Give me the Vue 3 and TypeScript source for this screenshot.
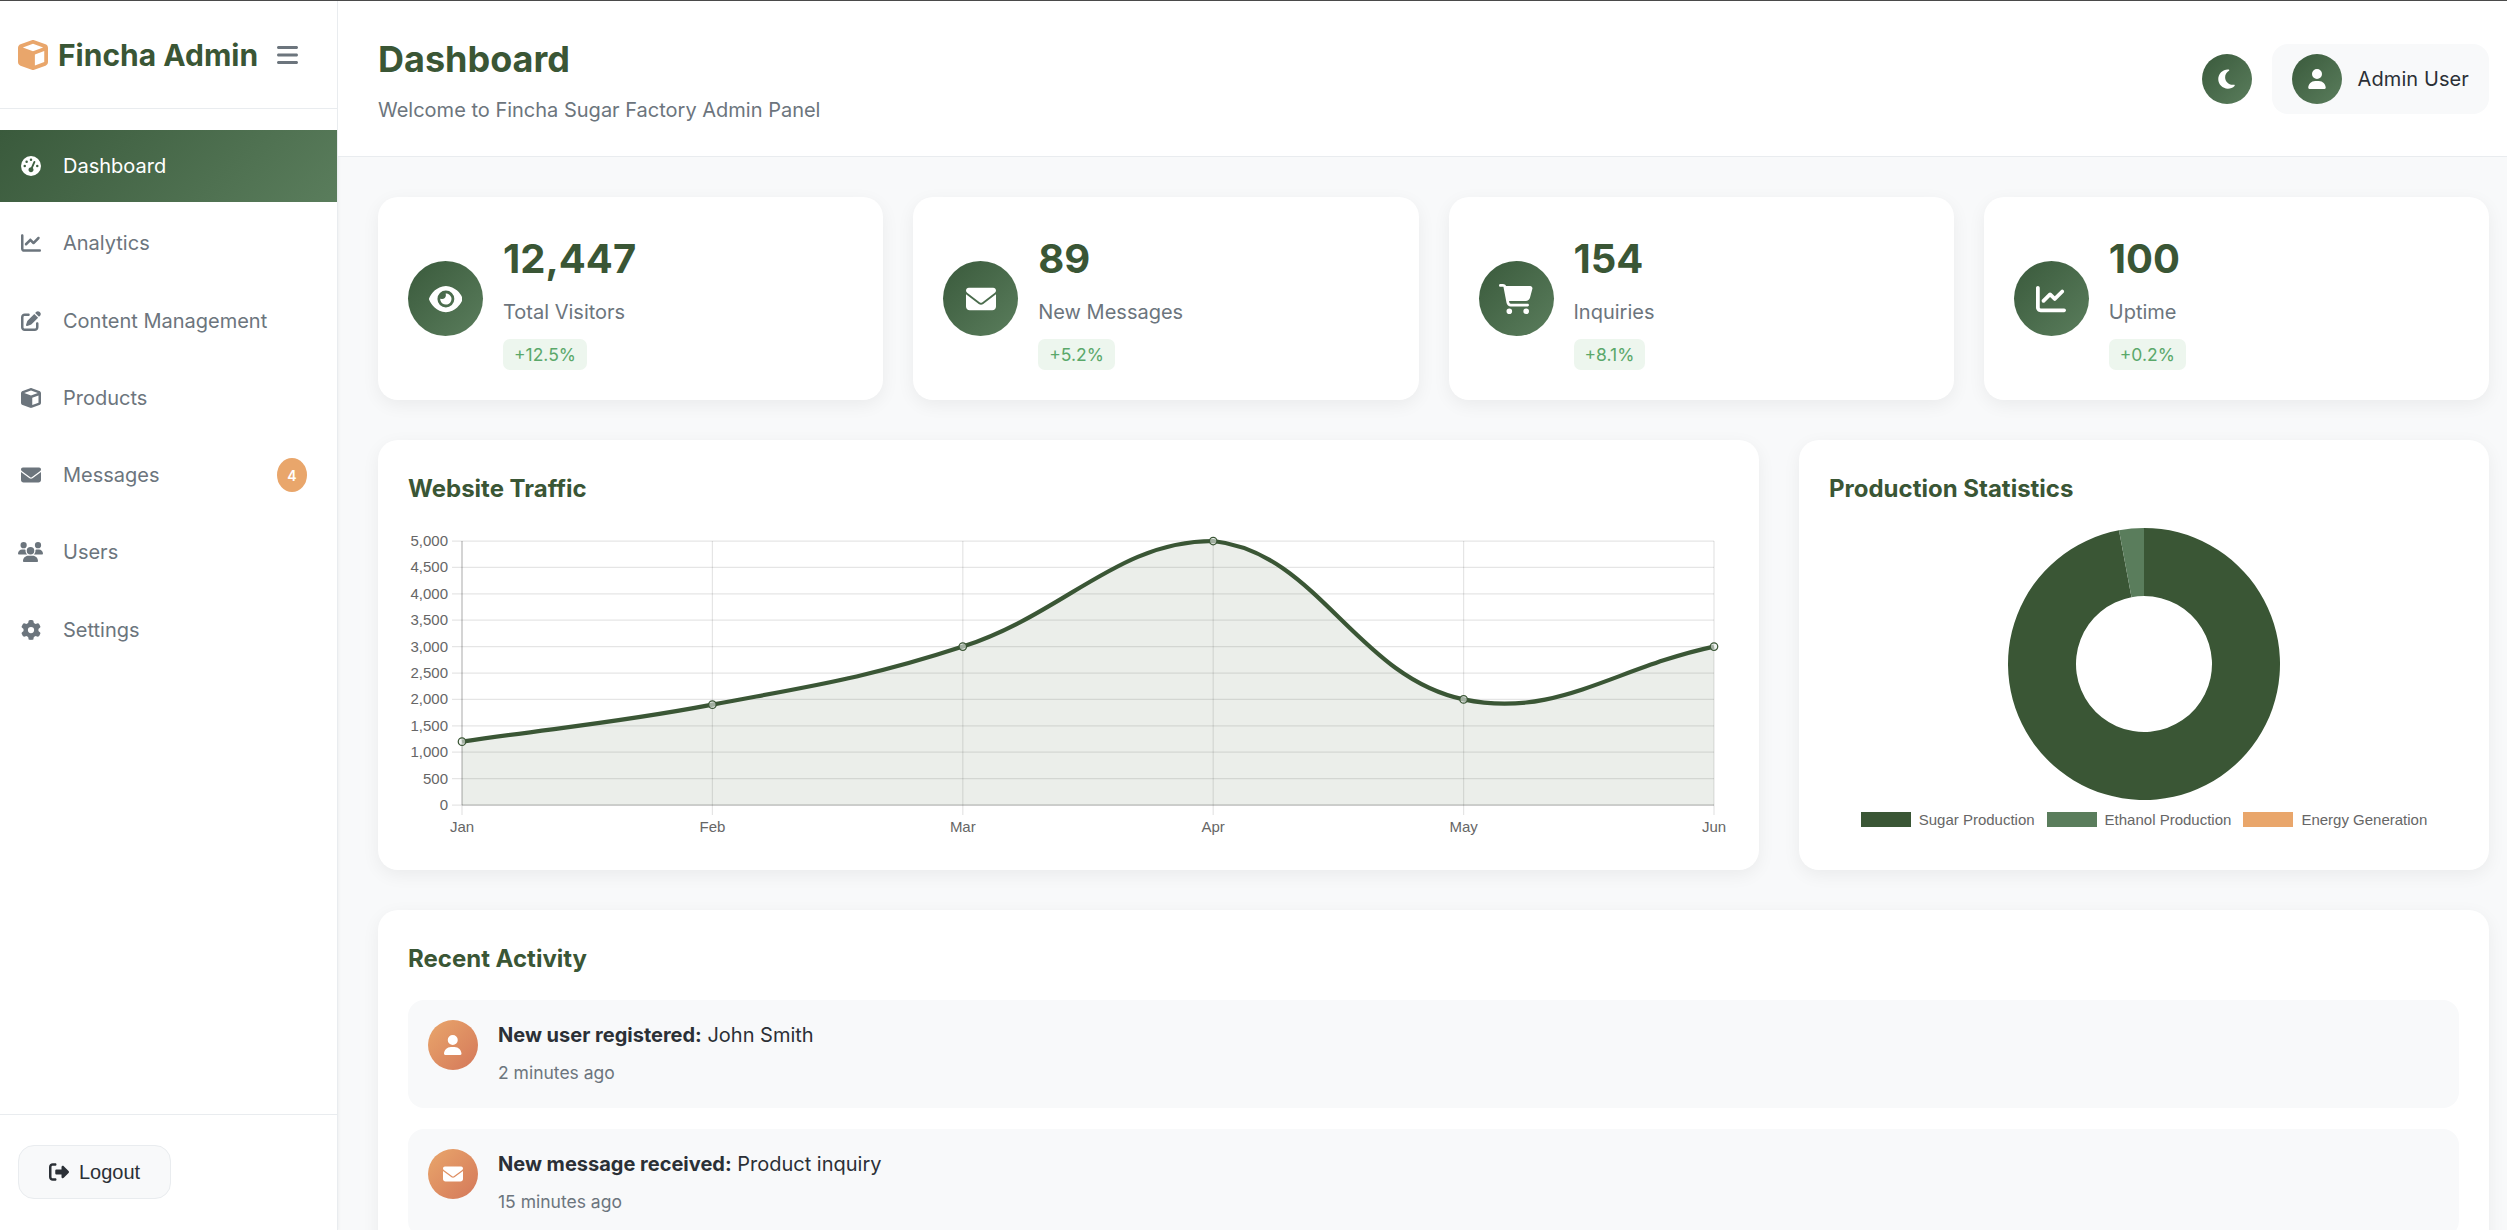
<script setup lang="ts">
import { computed } from 'vue'

type IconDef = { box: number; d: string }

const icons: Record<string, IconDef> = {
  cube: { box: 512, d: 'M234.5 5.7c13.9-5 29.1-5 43.1 0l192 68.6C495 83.4 512 107.5 512 134.6V377.4c0 27-17 51.2-42.5 60.3l-192 68.6c-13.9 5-29.1 5-43.1 0l-192-68.6C17 428.6 0 404.5 0 377.4V134.6c0-27 17-51.2 42.5-60.3l192-68.6zM256 66L82.3 128 256 190l173.7-62L256 66zm32 368.6l160-57.1v-188L288 246.6v188z' },
  bars: { box: 448, d: 'M0 96C0 78.3 14.3 64 32 64H416c17.7 0 32 14.3 32 32s-14.3 32-32 32H32C14.3 128 0 113.7 0 96zM0 256c0-17.7 14.3-32 32-32H416c17.7 0 32 14.3 32 32s-14.3 32-32 32H32c-17.7 0-32-14.3-32-32zM448 416c0 17.7-14.3 32-32 32H32c-17.7 0-32-14.3-32-32s14.3-32 32-32H416c17.7 0 32 14.3 32 32z' },
  gauge: { box: 512, d: 'M0 256a256 256 0 1 1 512 0A256 256 0 1 1 0 256zM288 96a32 32 0 1 0 -64 0 32 32 0 1 0 64 0zM256 416c35.3 0 64-28.7 64-64c0-17.4-6.9-33.1-18.1-44.6L366 161.7c5.3-12.1-.2-26.3-12.3-31.6s-26.3 .2-31.6 12.3L257.9 288c-.6 0-1.3 0-1.9 0c-35.3 0-64 28.7-64 64s28.7 64 64 64zM176 144a32 32 0 1 0 -64 0 32 32 0 1 0 64 0zM96 288a32 32 0 1 0 0-64 32 32 0 1 0 0 64zm352-32a32 32 0 1 0 -64 0 32 32 0 1 0 64 0z' },
  chart: { box: 512, d: 'M64 64c0-17.7-14.3-32-32-32S0 46.3 0 64V400c0 44.2 35.8 80 80 80H480c17.7 0 32-14.3 32-32s-14.3-32-32-32H80c-8.8 0-16-7.2-16-16V64zm406.6 86.6c12.5-12.5 12.5-32.8 0-45.3s-32.8-12.5-45.3 0L320 210.7l-57.4-57.4c-12.5-12.5-32.8-12.5-45.3 0l-112 112c-12.5 12.5-12.5 32.8 0 45.3s32.8 12.5 45.3 0L240 221.3l57.4 57.4c12.5 12.5 32.8 12.5 45.3 0l128-128z' },
  edit: { box: 512, d: 'M471.6 21.7c-21.9-21.9-57.3-21.9-79.2 0L362.3 51.7l97.9 97.9 30.1-30.1c21.9-21.9 21.9-57.3 0-79.2L471.6 21.7zm-299.2 220c-6.1 6.1-10.8 13.6-13.5 21.9l-29.6 88.8c-2.9 8.6-.6 18.1 5.8 24.6s15.9 8.7 24.6 5.8l88.8-29.6c8.2-2.7 15.7-7.4 21.9-13.5L437.7 172.3 339.7 74.3 172.4 241.7zM96 64C43 64 0 107 0 160V416c0 53 43 96 96 96H352c53 0 96-43 96-96V320c0-17.7-14.3-32-32-32s-32 14.3-32 32v96c0 17.7-14.3 32-32 32H96c-17.7 0-32-14.3-32-32V160c0-17.7 14.3-32 32-32h96c17.7 0 32-14.3 32-32s-14.3-32-32-32H96z' },
  envelope: { box: 512, d: 'M48 64C21.5 64 0 85.5 0 112c0 15.1 7.1 29.3 19.2 38.4L236.8 313.6c11.4 8.5 27 8.5 38.4 0L492.8 150.4c12.1-9.1 19.2-23.3 19.2-38.4c0-26.5-21.5-48-48-48H48zM0 176V384c0 35.3 28.7 64 64 64H448c35.3 0 64-28.7 64-64V176L294.4 339.2c-22.8 17.1-54 17.1-76.8 0L0 176z' },
  users: { box: 640, d: 'M144 0a80 80 0 1 1 0 160A80 80 0 1 1 144 0zM512 0a80 80 0 1 1 0 160A80 80 0 1 1 512 0zM0 298.7C0 239.8 47.8 192 106.7 192h42.7c15.9 0 31 3.5 44.6 9.7c-1.3 7.2-1.9 14.7-1.9 22.3c0 38.2 16.8 72.5 43.3 96c-.2 0-.4 0-.7 0H21.3C9.6 320 0 310.4 0 298.7zM405.3 320c-.2 0-.4 0-.7 0c26.6-23.5 43.3-57.8 43.3-96c0-7.6-.7-15-1.9-22.3c13.6-6.3 28.7-9.7 44.6-9.7h42.7C592.2 192 640 239.8 640 298.7c0 11.8-9.6 21.3-21.3 21.3H405.3zM224 224a96 96 0 1 1 192 0 96 96 0 1 1 -192 0zM128 485.3C128 411.7 187.7 352 261.3 352H378.7C452.3 352 512 411.7 512 485.3c0 14.7-11.9 26.7-26.7 26.7H154.7c-14.7 0-26.7-11.9-26.7-26.7z' },
  gear: { box: 512, d: 'M495.9 166.6c3.2 8.7 .5 18.4-6.4 24.6l-43.3 39.4c1.1 8.3 1.7 16.8 1.7 25.4s-.6 17.1-1.7 25.4l43.3 39.4c6.9 6.2 9.6 15.9 6.4 24.6c-4.4 11.9-9.7 23.3-15.8 34.3l-4.7 8.1c-6.6 11-14 21.4-22.1 31.2c-5.9 7.2-15.7 9.6-24.5 6.8l-55.7-17.7c-13.4 10.3-28.2 18.9-44 25.4l-12.5 57.1c-2 9.1-9 16.3-18.2 17.8c-13.8 2.3-28 3.5-42.5 3.5s-28.7-1.2-42.5-3.5c-9.2-1.5-16.2-8.7-18.2-17.8l-12.5-57.1c-15.8-6.5-30.6-15.1-44-25.4L83.1 425.9c-8.8 2.8-18.6 .3-24.5-6.8c-8.1-9.8-15.5-20.2-22.1-31.2l-4.7-8.1c-6.1-11-11.4-22.4-15.8-34.3c-3.2-8.7-.5-18.4 6.4-24.6l43.3-39.4C64.6 273.1 64 264.6 64 256s.6-17.1 1.7-25.4L22.4 191.2c-6.9-6.2-9.6-15.9-6.4-24.6c4.4-11.9 9.7-23.3 15.8-34.3l4.7-8.1c6.6-11 14-21.4 22.1-31.2c5.9-7.2 15.7-9.6 24.5-6.8l55.7 17.7c13.4-10.3 28.2-18.9 44-25.4l12.5-57.1c2-9.1 9-16.3 18.2-17.8C227.3 1.2 241.5 0 256 0s28.7 1.2 42.5 3.5c9.2 1.5 16.2 8.7 18.2 17.8l12.5 57.1c15.8 6.5 30.6 15.1 44 25.4l55.7-17.7c8.8-2.8 18.6-.3 24.5 6.8c8.1 9.8 15.5 20.2 22.1 31.2l4.7 8.1c6.1 11 11.4 22.4 15.8 34.3zM256 336a80 80 0 1 0 0-160 80 80 0 1 0 0 160z' },
  logout: { box: 512, d: 'M377.9 105.9L500.7 228.7c7.2 7.2 11.3 17.1 11.3 27.3s-4.1 20.1-11.3 27.3L377.9 406.1c-6.4 6.4-15 9.9-24 9.9c-18.7 0-33.9-15.2-33.9-33.9l0-62.1-128 0c-17.7 0-32-14.3-32-32l0-64c0-17.7 14.3-32 32-32l128 0 0-62.1c0-18.7 15.2-33.9 33.9-33.9c9 0 17.6 3.6 24 9.9zM160 96L96 96c-17.7 0-32 14.3-32 32l0 256c0 17.7 14.3 32 32 32l64 0c17.7 0 32 14.3 32 32s-14.3 32-32 32l-64 0c-53 0-96-43-96-96L0 128C0 75 43 32 96 32l64 0c17.7 0 32 14.3 32 32s-14.3 32-32 32z' },
  moon: { box: 384, d: 'M223.5 32C100 32 0 132.3 0 256S100 480 223.5 480c60.6 0 115.5-24.2 155.8-63.4c5-4.9 6.3-12.5 3.1-18.7s-10.1-9.7-17-8.5c-9.8 1.7-19.8 2.6-30.1 2.6c-96.9 0-175.5-78.8-175.5-176c0-65.8 36-123.1 89.3-153.3c6.1-3.5 9.2-10.5 7.7-17.3s-7.3-11.9-14.3-12.5c-6.3-.5-12.6-.8-19-.8z' },
  user: { box: 448, d: 'M224 256A128 128 0 1 0 224 0a128 128 0 1 0 0 256zm-45.7 48C79.8 304 0 383.8 0 482.3C0 498.7 13.3 512 29.7 512H418.3c16.4 0 29.7-13.3 29.7-29.7C448 383.8 368.2 304 269.7 304H178.3z' },
  eye: { box: 576, d: 'M288 32c-80.8 0-145.5 36.8-192.6 80.6C48.6 156 17.3 208 2.5 243.7c-3.3 7.9-3.3 16.7 0 24.6C17.3 304 48.6 356 95.4 399.4C142.5 443.2 207.2 480 288 480s145.5-36.8 192.6-80.6c46.8-43.5 78.1-95.4 93-131.1c3.3-7.9 3.3-16.7 0-24.6c-14.9-35.7-46.2-87.7-93-131.1C433.5 68.8 368.8 32 288 32zM144 256a144 144 0 1 1 288 0 144 144 0 1 1 -288 0zm144-64c0 35.3-28.7 64-64 64c-7.1 0-13.9-1.2-20.3-3.3c-5.5-1.8-11.9 1.6-11.7 7.4c.3 6.9 1.3 13.8 3.2 20.7c13.7 51.2 66.4 81.6 117.6 67.9s81.6-66.4 67.9-117.6c-11.1-41.5-47.8-69.4-88.6-71.1c-5.8-.2-9.2 6.1-7.4 11.7c2.1 6.4 3.3 13.2 3.3 20.3z' },
  cart: { box: 576, d: 'M0 24C0 10.7 10.7 0 24 0H69.5c22 0 41.5 12.8 50.6 32h411c26.3 0 45.5 25 38.6 50.4l-41 152.3c-8.5 31.4-37 53.3-69.5 53.3H170.7l5.4 28.5c2.2 11.3 12.1 19.5 23.6 19.5H488c13.3 0 24 10.7 24 24s-10.7 24-24 24H199.7c-34.6 0-64.3-24.6-70.7-58.5L77.4 54.5c-.7-3.8-4-6.5-7.9-6.5H24C10.7 48 0 37.3 0 24zM128 464a48 48 0 1 1 96 0 48 48 0 1 1 -96 0zm336-48a48 48 0 1 1 0 96 48 48 0 1 1 0-96z' },
}

const iconWidth = (name: string, h: number) => (icons[name].box / 512) * h

const nav = [
  { label: 'Dashboard', icon: 'gauge', active: true },
  { label: 'Analytics', icon: 'chart' },
  { label: 'Content Management', icon: 'edit' },
  { label: 'Products', icon: 'cube' },
  { label: 'Messages', icon: 'envelope', badge: '4' },
  { label: 'Users', icon: 'users' },
  { label: 'Settings', icon: 'gear' },
]

const stats = [
  { value: '12,447', label: 'Total Visitors', change: '+12.5%', icon: 'eye' },
  { value: '89', label: 'New Messages', change: '+5.2%', icon: 'envelope' },
  { value: '154', label: 'Inquiries', change: '+8.1%', icon: 'cart' },
  { value: '100', label: 'Uptime', change: '+0.2%', icon: 'chart' },
]

const activity = [
  { strong: 'New user registered:', rest: ' John Smith', time: '2 minutes ago', icon: 'user' },
  { strong: 'New message received:', rest: ' Product inquiry', time: '15 minutes ago', icon: 'envelope' },
]

/* Line chart geometry, in the svg's own coordinates */
const chartW = 1322
const chartH = 310
const left = 54
const top = 11
const plotW = 1252
const plotH = 264
const months = ['Jan', 'Feb', 'Mar', 'Apr', 'May', 'Jun']
const data = [1200, 1900, 3000, 5000, 2000, 3000]
const ticks = [5000, 4500, 4000, 3500, 3000, 2500, 2000, 1500, 1000, 500, 0]
const xAt = (i: number) => left + (plotW / 5) * i
const yAt = (v: number) => top + plotH * (1 - v / 5000)
const points = data.map((v, i) => ({ x: xAt(i), y: yAt(v) }))
const fmt = (n: number) => n.toLocaleString('en-US')

const linePath = computed(() => {
  const t = 0.4
  const clampX = (x: number) => Math.min(left + plotW, Math.max(left, x))
  const clampY = (y: number) => Math.min(top + plotH, Math.max(top, y))
  const ctrl = points.map((p, i) => {
    const prev = points[i - 1] ?? p
    const next = points[i + 1] ?? p
    const d01 = Math.hypot(p.x - prev.x, p.y - prev.y)
    const d12 = Math.hypot(next.x - p.x, next.y - p.y)
    const sum = d01 + d12 || 1
    const dx = next.x - prev.x
    const dy = next.y - prev.y
    return {
      inX: clampX(p.x - t * (d01 / sum) * dx),
      inY: clampY(p.y - t * (d01 / sum) * dy),
      outX: clampX(p.x + t * (d12 / sum) * dx),
      outY: clampY(p.y + t * (d12 / sum) * dy),
    }
  })
  let d = `M${points[0].x} ${points[0].y}`
  for (let i = 1; i < points.length; i++) {
    d += ` C${ctrl[i - 1].outX} ${ctrl[i - 1].outY} ${ctrl[i].inX} ${ctrl[i].inY} ${points[i].x} ${points[i].y}`
  }
  return d
})
const areaPath = computed(
  () => `${linePath.value} L${xAt(5)} ${yAt(0)} L${xAt(0)} ${yAt(0)} Z`,
)

/* Doughnut */
const R = 136
const r = 68
const c = 136
const polar = (rad: number, deg: number) => {
  const a = ((deg - 90) * Math.PI) / 180
  return `${c + rad * Math.cos(a)} ${c + rad * Math.sin(a)}`
}
const slice = (from: number, to: number) => {
  const large = to - from > 180 ? 1 : 0
  return `M${polar(R, from)} A${R} ${R} 0 ${large} 1 ${polar(R, to)} L${polar(r, to)} A${r} ${r} 0 ${large} 0 ${polar(r, from)} Z`
}
const legend = [
  { label: 'Sugar Production', color: '#3a5635' },
  { label: 'Ethanol Production', color: '#5a7d5c' },
  { label: 'Energy Generation', color: '#e9a66b' },
]
</script>

<template>
  <div class="app">
    <aside class="sidebar">
      <div class="brand">
        <svg class="brand-icon" :width="30" :height="30" viewBox="0 0 512 512"><path :d="icons.cube.d" /></svg>
        <span class="brand-name">Fincha Admin</span>
        <svg class="menu-icon" :width="21" :height="24" viewBox="0 0 448 512"><path :d="icons.bars.d" /></svg>
      </div>
      <nav class="nav">
        <a v-for="item in nav" :key="item.label" class="nav-item" :class="{ active: item.active }">
          <span class="nav-icon">
            <svg :width="iconWidth(item.icon, 20)" height="20" :viewBox="`0 0 ${icons[item.icon].box} 512`"><path :d="icons[item.icon].d" /></svg>
          </span>
          <span class="nav-label">{{ item.label }}</span>
          <span v-if="item.badge" class="nav-badge">{{ item.badge }}</span>
        </a>
      </nav>
      <div class="side-foot">
        <button class="logout">
          <svg width="20" height="20" viewBox="0 0 512 512"><path :d="icons.logout.d" /></svg>
          <span>Logout</span>
        </button>
      </div>
    </aside>

    <div class="main">
      <header class="topbar">
        <div class="heading">
          <h1 class="page-title">Dashboard</h1>
          <p class="page-sub">Welcome to Fincha Sugar Factory Admin Panel</p>
        </div>
        <div class="top-right">
          <div class="round">
            <svg width="17" height="22" viewBox="0 0 384 512"><path :d="icons.moon.d" /></svg>
          </div>
          <div class="user-pill">
            <div class="round">
              <svg width="18" height="20" viewBox="0 0 448 512"><path :d="icons.user.d" /></svg>
            </div>
            <span class="user-name">Admin User</span>
          </div>
        </div>
      </header>

      <main class="content">
        <section class="stats">
          <div v-for="s in stats" :key="s.label" class="card stat">
            <div class="stat-icon">
              <svg :width="iconWidth(s.icon, 30)" height="30" :viewBox="`0 0 ${icons[s.icon].box} 512`"><path :d="icons[s.icon].d" /></svg>
            </div>
            <div class="stat-body">
              <div class="stat-value">{{ s.value }}</div>
              <div class="stat-label">{{ s.label }}</div>
              <span class="stat-change">{{ s.change }}</span>
            </div>
          </div>
        </section>

        <section class="charts">
          <div class="card chart-card">
            <h3 class="card-title">Website Traffic</h3>
            <svg class="line-chart" :width="chartW" :height="chartH" :viewBox="`0 0 ${chartW} ${chartH}`">
              <g stroke="rgba(0,0,0,0.1)" stroke-width="1.25">
                <line v-for="t in ticks" :key="t" :x1="left - 10" :x2="left + plotW" :y1="yAt(t)" :y2="yAt(t)" />
                <line v-for="(m, i) in months" :key="m" :x1="xAt(i)" :x2="xAt(i)" :y1="top" :y2="top + plotH + 10" />
              </g>
              <line :x1="left" :x2="left" :y1="top" :y2="top + plotH" stroke="rgba(0,0,0,0.18)" stroke-width="1.25" />
              <line :x1="left" :x2="left + plotW" :y1="top + plotH" :y2="top + plotH" stroke="rgba(0,0,0,0.18)" stroke-width="1.25" />
              <path :d="areaPath" fill="rgba(58,86,53,0.1)" />
              <path :d="linePath" fill="none" stroke="#3a5635" stroke-width="4.2" />
              <circle v-for="(p, i) in points" :key="i" :cx="p.x" :cy="p.y" r="3.75" fill="rgba(232,236,233,0.6)" stroke="#3a5635" stroke-width="1.25" />
              <text v-for="t in ticks" :key="'y' + t" class="tick" :x="left - 14" :y="yAt(t) + 5" text-anchor="end">{{ fmt(t) }}</text>
              <text v-for="(m, i) in months" :key="'x' + m" class="tick" :x="xAt(i)" :y="top + plotH + 27" text-anchor="middle">{{ m }}</text>
            </svg>
          </div>

          <div class="card donut-card">
            <h3 class="card-title">Production Statistics</h3>
            <svg class="donut" width="272" height="272" viewBox="0 0 272 272">
              <path :d="slice(0, 349.4)" fill="#3a5635" />
              <path :d="slice(349.4, 360)" fill="#5a7d5c" />
            </svg>
            <div class="legend">
              <div v-for="l in legend" :key="l.label" class="legend-item">
                <span class="legend-box" :style="{ background: l.color }"></span>
                <span>{{ l.label }}</span>
              </div>
            </div>
          </div>
        </section>

        <section class="card recent">
          <h3 class="card-title">Recent Activity</h3>
          <div class="activity-list">
            <div v-for="a in activity" :key="a.time" class="activity">
              <div class="activity-icon">
                <svg :width="iconWidth(a.icon, 20)" height="20" :viewBox="`0 0 ${icons[a.icon].box} 512`"><path :d="icons[a.icon].d" /></svg>
              </div>
              <div class="activity-body">
                <div class="activity-text"><strong>{{ a.strong }}</strong>{{ a.rest }}</div>
                <div class="activity-time">{{ a.time }}</div>
              </div>
            </div>
          </div>
        </section>
      </main>
    </div>
  </div>
</template>

<style>
html, body { margin: 0; padding: 0; overflow: hidden; background: #f8f9fa; }
</style>

<style scoped>
.app {
  display: flex;
  width: 2507px;
  height: 1230px;
  overflow: hidden;
  box-sizing: border-box;
  border-top: 1px solid #4a4a4a;
  font-family: Inter, "Noto Sans", sans-serif;
  color: #2b3036;
  background: #f8f9fa;
}
svg { fill: currentColor; display: block; flex: none; }

.sidebar {
  width: 338px;
  flex: none;
  box-sizing: border-box;
  background: #fff;
  border-right: 1px solid #e9ecef;
  box-shadow: 1px 0 3px rgba(0, 0, 0, 0.04);
  display: flex;
  flex-direction: column;
}
.brand {
  height: 108px;
  box-sizing: border-box;
  border-bottom: 1px solid #e9ecef;
  padding: 0 18px;
  display: flex;
  align-items: center;
  flex: none;
}
.brand-icon { color: #e9a66b; }
.brand-name {
  margin-left: 10px;
  font-size: 30px;
  font-weight: 700;
  color: #3a5635;
}
.menu-icon { margin-left: 19px; color: #6c757d; }

.nav { padding-top: 21px; flex: 1; display: flex; flex-direction: column; gap: 5.3px; }
.nav-item {
  height: 72px;
  display: flex;
  align-items: center;
  padding: 0 30px 0 18px;
  color: #6c757d;
  font-size: 20px;
}
.nav-item.active {
  color: #fff;
  background: linear-gradient(135deg, #3a5a3c, #5a7d5c);
}
.nav-icon { width: 25px; display: flex; justify-content: center; margin-right: 20px; }
.nav-label { flex: 1; }
.nav-badge {
  width: 30px;
  height: 34px;
  border-radius: 50%;
  background: #e9a66b;
  color: #fff;
  font-size: 14px;
  font-weight: 600;
  display: flex;
  align-items: center;
  justify-content: center;
}

.side-foot {
  flex: none;
  border-top: 1px solid #e9ecef;
  padding: 30px 18px;
  height: 116px;
  box-sizing: border-box;
}
.logout {
  width: 153px;
  height: 54px;
  border: 1px solid #e9ecef;
  border-radius: 16px;
  background: #f8f9fa;
  color: #2b3036;
  font-family: "Liberation Sans", Arial, sans-serif;
  font-size: 20px;
  display: flex;
  align-items: center;
  justify-content: center;
  gap: 10px;
  padding: 0;
}

.main { flex: 1; min-width: 0; display: flex; flex-direction: column; }
.topbar {
  flex: none;
  height: 156px;
  box-sizing: border-box;
  background: #fff;
  border-bottom: 1px solid #e9ecef;
  padding: 0 18px 0 40px;
  display: flex;
  align-items: center;
  justify-content: space-between;
}
.heading { align-self: flex-start; padding-top: 37px; }
.page-title { margin: 0; font-size: 36px; font-weight: 700; line-height: 42px; color: #3a5635; }
.page-sub { margin: 14px 0 0; font-size: 20px; line-height: 32px; color: #6c757d; }
.top-right { display: flex; align-items: center; gap: 20px; }
.round {
  width: 50px;
  height: 50px;
  border-radius: 50%;
  background: linear-gradient(135deg, #3a5a3c, #5a7d5c);
  color: #fff;
  display: flex;
  align-items: center;
  justify-content: center;
}
.user-pill {
  height: 70px;
  box-sizing: border-box;
  padding: 0 20px;
  border-radius: 16px;
  background: #f8f9fa;
  display: flex;
  align-items: center;
  gap: 16px;
}
.user-name { font-size: 20px; font-weight: 400; letter-spacing: 0.1px; }

.content {
  flex: 1;
  min-height: 0;
  padding: 40px 18px 0 40px;
  display: flex;
  flex-direction: column;
  gap: 40px;
}
.card {
  background: #fff;
  border-radius: 20px;
  box-shadow: 0 5px 18px rgba(0, 0, 0, 0.06);
  box-sizing: border-box;
}
.stats { display: grid; grid-template-columns: repeat(4, 1fr); gap: 30px; }
.stat { height: 203px; padding: 30px; display: flex; align-items: center; gap: 20px; }
.stat-icon {
  width: 75px;
  height: 75px;
  border-radius: 50%;
  background: linear-gradient(135deg, #3a5a3c, #5a7d5c);
  color: #fff;
  display: flex;
  align-items: center;
  justify-content: center;
  flex: none;
}
.stat-value { font-size: 40px; font-weight: 700; line-height: 64px; color: #3a5635; }
.stat-label { margin-top: 7px; font-size: 20px; line-height: 28px; color: #6c757d; }
.stat-change {
  display: inline-block;
  margin-top: 13px;
  padding: 0 11px;
  height: 31px;
  line-height: 32px;
  border-radius: 7px;
  background: #edf6ee;
  color: #5aa86a;
  font-size: 17.5px;
  font-weight: 400;
}

.charts { display: grid; grid-template-columns: 1381px 1fr; gap: 40px; }
.chart-card, .donut-card { height: 430px; padding: 30px; }
.card-title { margin: 0; font-size: 24px; font-weight: 700; line-height: 38px; color: #3a5635; }
.line-chart { margin-top: 22px; }
.donut-card { display: flex; flex-direction: column; align-items: center; }
.donut-card .card-title { align-self: flex-start; }
.donut { margin-top: 20px; }
.legend {
  margin-top: 11px;
  display: flex;
  gap: 12px;
  font-family: "Liberation Sans", Arial, sans-serif;
  font-size: 15px;
  color: #666;
  line-height: 17px;
}
.legend-item { display: flex; align-items: center; gap: 8px; }
.legend-box { width: 50px; height: 15px; }
.tick { font-family: "Liberation Sans", Arial, sans-serif; font-size: 15px; fill: #666; }

.recent { padding: 30px; flex: none; }
.activity-list { margin-top: 22px; display: flex; flex-direction: column; gap: 21px; }
.activity {
  height: 108px;
  box-sizing: border-box;
  padding: 20px;
  background: #f8f9fa;
  border-radius: 16px;
  display: flex;
  align-items: flex-start;
  gap: 20px;
}
.activity-icon {
  width: 50px;
  height: 50px;
  border-radius: 50%;
  background: linear-gradient(135deg, #e9a66b, #d4785a);
  color: #fff;
  display: flex;
  align-items: center;
  justify-content: center;
  flex: none;
}
.activity-body { margin-top: -1px; }
.activity-text { font-size: 20px; line-height: 32px; }
.activity-text strong { font-weight: 700; }
.activity-time { margin-top: 8px; font-size: 17.5px; line-height: 28px; color: #6c757d; }
</style>
